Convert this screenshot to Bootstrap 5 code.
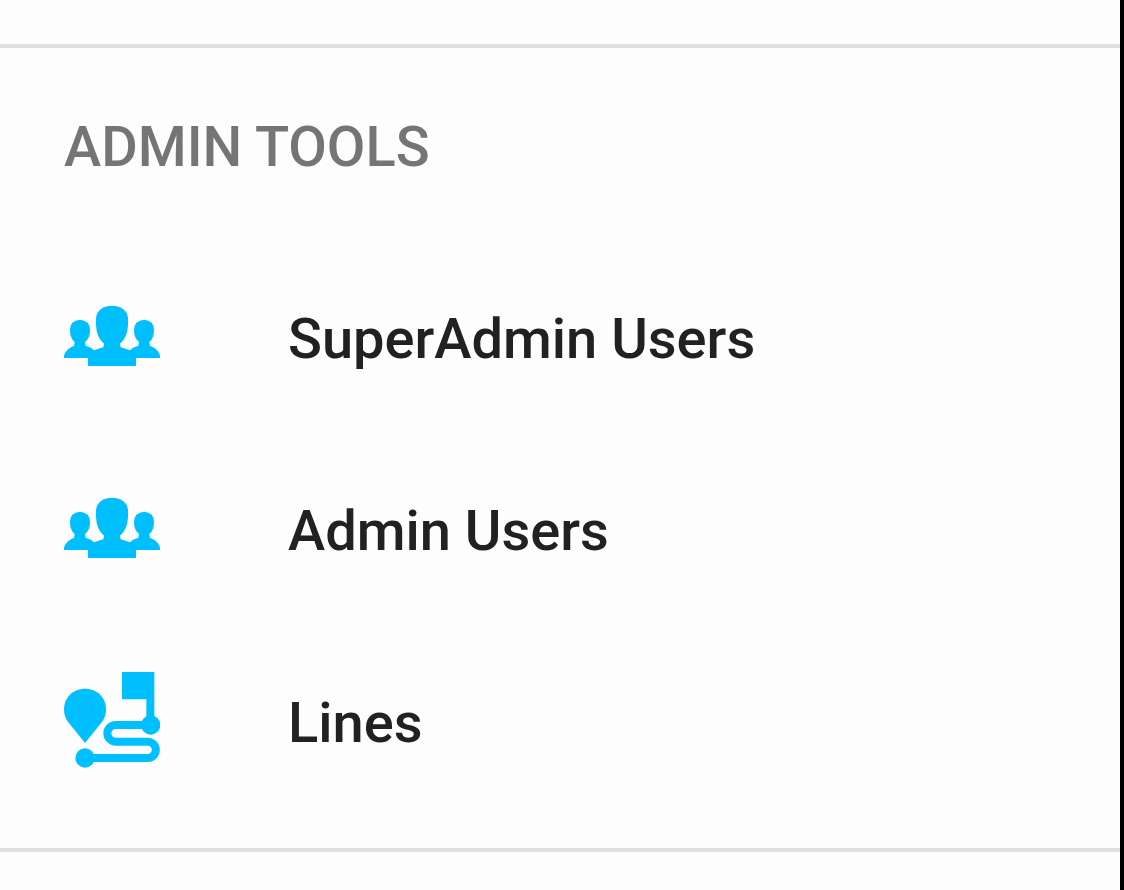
<!DOCTYPE html>
<html lang="en">
<head>
<meta charset="utf-8">
<meta name="viewport" content="width=device-width, initial-scale=1">
<title>Admin Tools</title>
<link href="https://cdn.jsdelivr.net/npm/bootstrap@5.3.0/dist/css/bootstrap.min.css" rel="stylesheet">
<style>
  body { font-family: Roboto, "Liberation Sans", sans-serif; background: #fdfdfd; }
  .drawer { border-right: 4px solid #000; padding-top: 44px; }
  .drawer-group { border: solid #e0e0e0; border-width: 4px 0; padding-bottom: 32px; }
  .drawer-title { font-size: 56px; line-height: 66px; font-weight: 500; color: #757575; padding: 66px 64px 60px; }
  .drawer-link { height: 192px; padding: 0 64px; gap: 128px; font-size: 56px; line-height: 66px; font-weight: 500; color: #212121; }
  .drawer-link:hover { background: #f1f1f1; }
  .drawer-link span { padding-top: 6px; }
  .drawer-icon { width: 96px; height: 96px; fill: #00bfff; }
</style>
</head>
<body>
<svg class="d-none" aria-hidden="true">
  <symbol id="users" viewBox="36 -24 288 288">
    <path d="M36 186V179Q40 160 66 149L68 138Q54 127 54 102Q55 73 83 71Q113 73 114 102Q114 127 99 138L101 149Q117 153 126 163Q139 158 154 154L156 143Q133 123 132 86V66Q136 31 180 29Q224 31 228 66V86Q227 123 204 143L206 154Q221 158 234 163Q243 153 259 149L261 138Q246 127 246 102Q247 73 277 71Q305 73 306 102Q306 127 292 138L294 149Q320 160 324 179V186H252V210H108V186Z"/>
  </symbol>
  <symbol id="route" viewBox="36 36 288 288">
    <path d="M99 249L49 187Q36 170 36 149C36 112 63 86 99 86S162 112 162 149Q162 170 149 187Z"/>
    <circle cx="99" cy="150" r="22" fill="none" stroke="#1eaeee" stroke-width="3"/>
    <path d="M210 36H307V195H283V118H210Z"/>
    <circle cx="296" cy="195" r="29"/>
    <circle cx="99" cy="294" r="29"/>
    <path d="M296 195H191A25 25 0 0 0 191 245H287A24 24 0 0 1 287 294H99" fill="none" stroke="#00bfff" stroke-width="24"/>
  </symbol>
</svg>
<nav class="drawer min-vh-100" aria-label="Admin tools">
  <section class="drawer-group">
    <h2 class="drawer-title m-0">ADMIN TOOLS</h2>
    <ul class="list-unstyled m-0">
      <li><a href="#" class="drawer-link d-flex align-items-center text-decoration-none"><svg class="drawer-icon flex-shrink-0" aria-hidden="true"><use href="#users"/></svg><span>SuperAdmin Users</span></a></li>
      <li><a href="#" class="drawer-link d-flex align-items-center text-decoration-none"><svg class="drawer-icon flex-shrink-0" aria-hidden="true"><use href="#users"/></svg><span>Admin Users</span></a></li>
      <li><a href="#" class="drawer-link d-flex align-items-center text-decoration-none"><svg class="drawer-icon flex-shrink-0" aria-hidden="true"><use href="#route"/></svg><span>Lines</span></a></li>
    </ul>
  </section>
</nav>
<script src="https://cdn.jsdelivr.net/npm/bootstrap@5.3.0/dist/js/bootstrap.bundle.min.js"></script>
</body>
</html>
